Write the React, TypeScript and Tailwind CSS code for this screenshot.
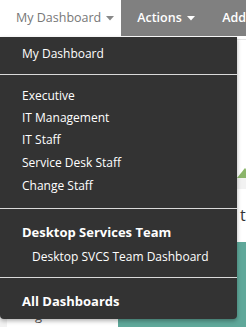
import React from 'react'

const font = { fontFamily: '"Open Sans", "Noto Sans", sans-serif' }

function Caret({ className }: { className: string }) {
  return (
    <svg width="8" height="5" viewBox="0 0 8 5" className={className}>
      <path d="M0 0 L8 0 L4 4.5 Z" fill="currentColor" />
    </svg>
  )
}

export default function App() {
  return (
    <div className="relative w-[246px] h-[327px] overflow-hidden bg-white" style={font}>
      {/* top nav */}
      <div className="flex h-[36px] text-[12.5px]">
        <div className="flex items-center gap-[5px] pl-[16px] w-[127px] bg-white text-[#777]">
          My Dashboard <Caret className="text-[#888] mt-[1px]" />
        </div>
        <div className="flex items-center flex-1 bg-[#808080] text-white font-semibold">
          <span className="flex items-center gap-[5px] pl-[16px] w-[101px]">
            Actions <Caret className="text-white mt-[1px]" />
          </span>
          <span>Add</span>
        </div>
      </div>

      {/* page content behind */}
      <div className="flex flex-col">
        <div className="h-[4px] border-b border-[#e5e5e5]" />
        <div className="h-[137px]" />
        <div className="relative h-[12px] bg-[#f2f2f2] border-t border-[#e8e8e8]">
          <div className="absolute left-[237px] -top-[10px] w-0 h-0 border-l-[8px] border-l-transparent border-r-[8px] border-r-transparent border-b-[10px] border-b-[#8bb56a]" />
        </div>
        <div className="h-[16px]" />
        <div className="pl-[240px] text-[16px] text-[#333] leading-[20px]">t</div>
        <div className="h-[17px]" />
        <div className="flex h-[100px]">
          <div className="w-[7px] bg-[#f2f2f2]" />
          <div className="w-[111px] bg-white pt-[66px] pl-[28px] text-[#555] text-[13px] leading-[14px]">g</div>
          <div className="flex-1 bg-[#5fa89a]" />
        </div>
      </div>

      {/* dropdown */}
      <div className="absolute left-0 top-[37px] w-[237px] bg-[#333] text-white text-[12px] rounded-b-[4px] shadow-[0_2px_4px_rgba(0,0,0,0.3)] pb-[8px]">
        <div className="pt-[7px] pb-[10px] pl-[22px] leading-[20px]">My Dashboard</div>
        <div className="h-px bg-[#d9d9d9]" />
        <div className="flex flex-col pt-[10px] pb-[10px] leading-[22px]">
          <div className="pl-[22px] h-[22px]">Executive</div>
          <div className="pl-[22px] h-[22px]">IT Management</div>
          <div className="pl-[22px] h-[23px]">IT Staff</div>
          <div className="pl-[22px] h-[23px]">Service Desk Staff</div>
          <div className="pl-[22px] h-[23px]">Change Staff</div>
        </div>
        <div className="h-px bg-[#d9d9d9]" />
        <div className="pt-[13px] pl-[22px] text-[13px] font-bold leading-[20px]">Desktop Services Team</div>
        <div className="pt-[5px] pb-[10px] pl-[32px] leading-[20px]">Desktop SVCS Team Dashboard</div>
        <div className="h-px bg-[#d9d9d9]" />
        <div className="pt-[13px] pl-[22px] text-[13px] font-bold leading-[20px]">All Dashboards</div>
      </div>
    </div>
  )
}
